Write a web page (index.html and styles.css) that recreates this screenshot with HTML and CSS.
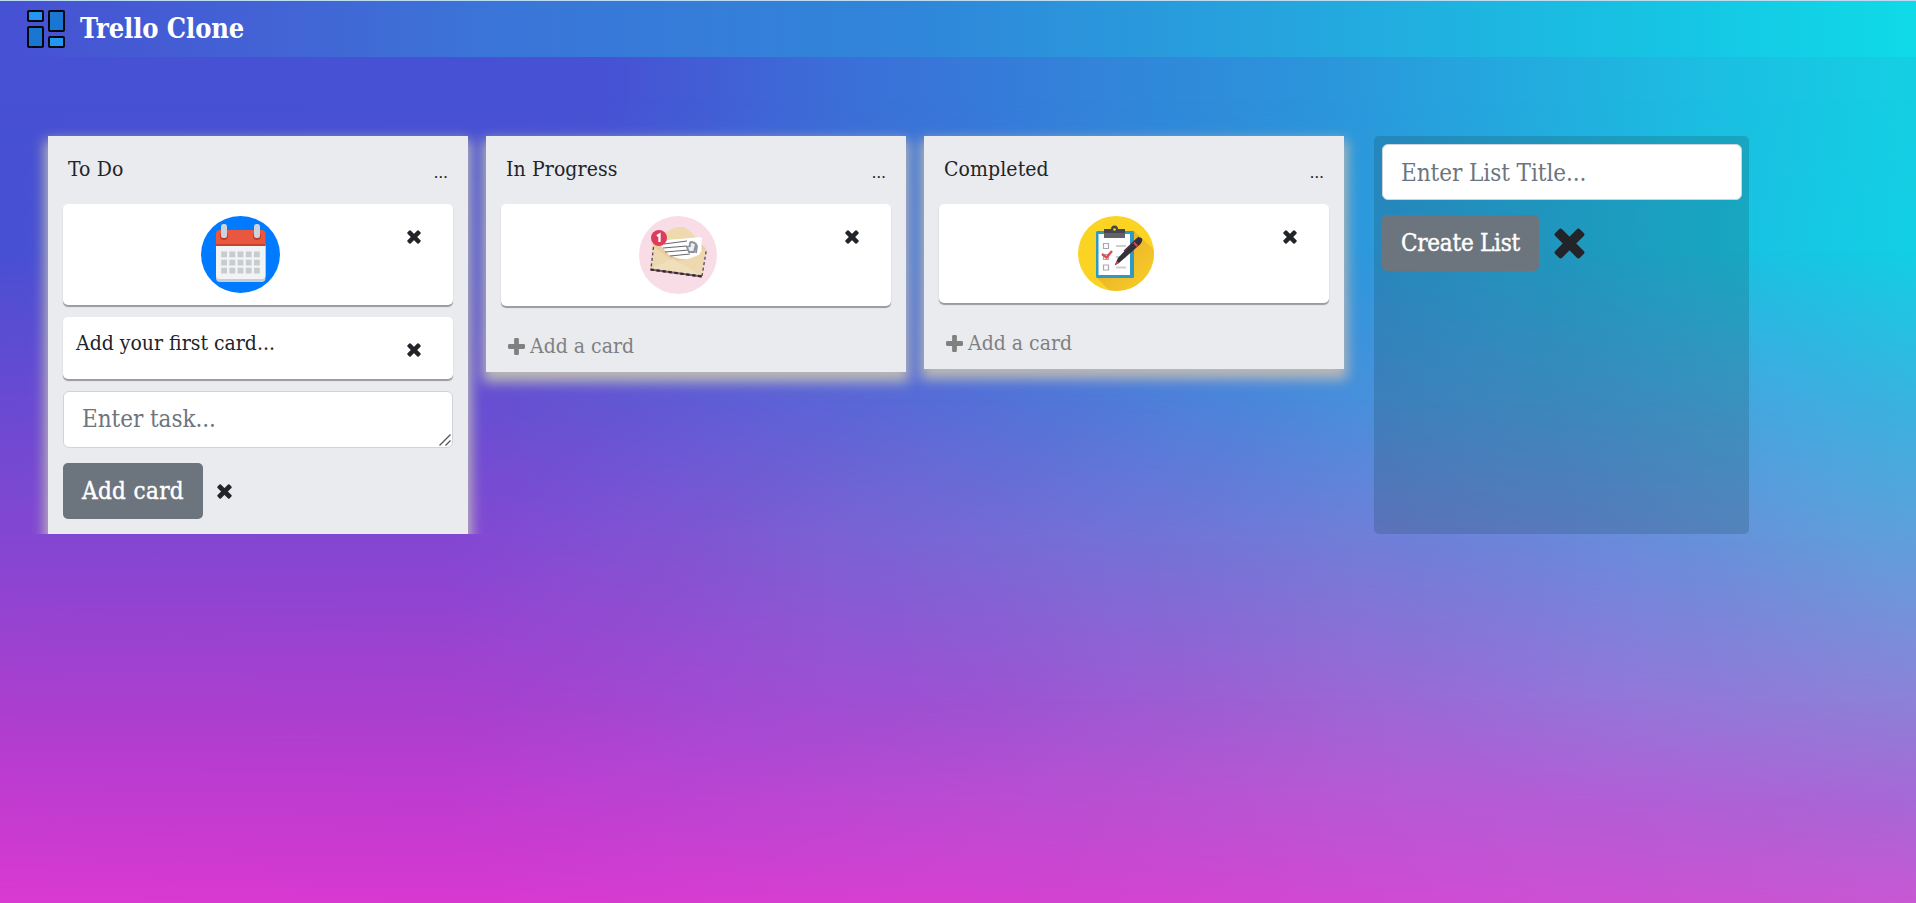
FILE: index.html
```html
<!DOCTYPE html>
<html lang="en">
<head>
<meta charset="utf-8">
<title>Trello Clone</title>
<link rel="stylesheet" href="styles.css">
</head>
<body>
<div class="backdrop"><i class="tone t1"></i><i class="tone t2"></i><i class="tone t3"></i><i class="tone t4"></i><i class="tone t5"></i><i class="tone t6"></i></div>

<svg class="defs" width="0" height="0">
  <symbol id="times" viewBox="0 0 32 32"><g transform="rotate(45 16 16)"><rect x="-2" y="11" width="36" height="10" rx="2.2"/><rect x="11" y="-2" width="10" height="36" rx="2.2"/></g></symbol>
  <symbol id="plus" viewBox="0 0 32 32"><rect y="11.500" width="32" height="9" rx="2.4"/><rect x="11.500" width="9" height="32" rx="2.4"/></symbol>
</svg>

<header class="navbar">
  <svg class="logo" viewBox="0 0 38 38" stroke="#05070c" stroke-width="2">
    <rect x="1" y="1" width="15" height="10" rx="1" fill="#2196f3"/>
    <rect x="22" y="1" width="15" height="20" rx="1" fill="#1976d2"/>
    <rect x="1" y="17" width="15" height="20" rx="1" fill="#1976d2"/>
    <rect x="22" y="27" width="15" height="10" rx="1" fill="#2196f3"/>
  </svg>
  <span class="brand">Trello Clone</span>
</header>

<main class="board">
  <section class="list">
    <div class="list-head"><span class="title">To Do</span><span class="dots">...</span></div>
    <div class="card card-todo">
      <svg class="pic" width="79" height="77" viewBox="0 0 79 77">
        <ellipse cx="39.500" cy="38.500" rx="39.500" ry="38.500" fill="#007bff"/>
        <path d="M15 28h49.500v34a4 4 0 0 1-4 4h-41.500a4 4 0 0 1-4-4z" fill="#c5cdd6"/>
        <path d="M15 28h49.500v31a4 4 0 0 1-4 4h-41.500a4 4 0 0 1-4-4z" fill="#f1f3f5"/>
        <path d="M15 30V18a4 4 0 0 1 4-4h41.500a4 4 0 0 1 4 4v12z" fill="#e9573f"/>
        <path d="M15 28h49.500v2H15z" fill="#c9432f"/>
        <circle cx="23" cy="20" r="4" fill="#bd3c2c"/><circle cx="56" cy="20" r="4" fill="#bd3c2c"/>
        <rect x="20" y="8" width="6" height="14" rx="2.500" fill="#cdd3da"/><rect x="53" y="8" width="6" height="14" rx="2.500" fill="#cdd3da"/>
        <g stroke="#c8cccf" stroke-width="5.800" stroke-dasharray="5.800 2.400"><path d="M20.200 38.300h39"/><path d="M20.200 46.600h39"/><path d="M20.200 54.700h39"/></g>
      </svg>
      <svg class="x"><use href="#times"/></svg>
    </div>
    <div class="card card-text"><span class="card-label">Add your first card...</span><svg class="x"><use href="#times"/></svg></div>
    <div class="task-wrap">
      <textarea class="task" rows="1" placeholder="Enter task..."></textarea>
      <svg class="grip" viewBox="0 0 12 12"><path d="M.5 11.500 11.500.5M6.500 11.500l5-5" fill="none" stroke="#50545a" stroke-width="1.300"/></svg>
    </div>
    <div class="actions"><button class="btn btn-card">Add card</button><svg class="x"><use href="#times"/></svg></div>
  </section>

  <section class="list">
    <div class="list-head"><span class="title">In Progress</span><span class="dots">...</span></div>
    <div class="card card-prog">
      <svg class="pic" width="78" height="78" viewBox="0 0 78 78">
        <circle cx="39" cy="39" r="39" fill="#f8dde7"/>
        <path d="M14 27 36 13q6-4 12 0L68 34 63 60 11 53z" fill="#e8cfa2"/>
        <path d="M29 15q12-8 22 0l8 9H16z" fill="#efd9ae"/>
        <path d="M19 25l43-4 1 20-10 4-23-6z" fill="#fff"/>
        <path d="M15 31 35 46 46 44 67 33 63 60 11 53z" fill="#eed8b0"/>
        <path d="M22 30q17 21 39 8l2-16-35 2z" fill="#fff"/>
        <path d="M25 28l23-3M24 32l24-2M26 36l24-2M31 40l20-2" stroke="#66666f" stroke-width="1"/>
        <path d="M53 26q-3 0-2 4l-3 1 2 5 5 0 2-8zM55 26l3 4-1 7" fill="#eee" stroke="#8c929b" stroke-width="1.800"/>
        <path d="M11 53 34 43 63 60" fill="#f0dfbd"/>
        <path d="M14.500 31 12 53 M63 60 67.500 33" fill="none" stroke="#e9dfd6" stroke-width="1.500"/>
        <path d="M14.500 31 12 53 M63 60 67.500 33" fill="none" stroke="#5c4452" stroke-width="1.300" stroke-dasharray="3 2.500"/>
        <path d="M11.500 53.500 63 60.500" fill="none" stroke="#7f6068" stroke-width="2.200"/>
        <path d="M11.500 53.500 63 60.500" fill="none" stroke="#33283a" stroke-width="2.200" stroke-dasharray="3.500 2.500"/>
        <circle cx="20" cy="22" r="8" fill="#dc3d5d"/><path d="M18 20l2.500-1.500V26" fill="none" stroke="#fff" stroke-width="2.300"/>
      </svg>
      <svg class="x"><use href="#times"/></svg>
    </div>
    <div class="add"><svg class="plus"><use href="#plus"/></svg><span>Add a card</span></div>
  </section>

  <section class="list">
    <div class="list-head"><span class="title">Completed</span><span class="dots">...</span></div>
    <div class="card card-done">
      <svg class="pic" width="76" height="75" viewBox="0 0 76 75">
        <defs>
          <clipPath id="disc"><ellipse cx="38" cy="37.500" rx="38" ry="37.500"/></clipPath>
          <linearGradient id="shade" x1="0" y1="0" x2="1" y2="1"><stop offset=".3" stop-color="#e9b52d"/><stop offset=".75" stop-color="#f8cc26"/></linearGradient>
        </defs>
        <g clip-path="url(#disc)"><path d="M0 0h76v75H0z" fill="#fbd323"/><path d="M55 14 85 42 60 90 42 85 18 61z" fill="url(#shade)"/></g>
        <rect x="18" y="15" width="38" height="47" rx="1.500" fill="#2e9ac4"/><path d="M20.500 18h31.500v41H20.500z" fill="#fff"/>
        <path d="M26 13h7a3.500 3.500 0 0 1 7 0h7v9H26z" fill="#45454d"/><path d="M26 17h21v5H26z" fill="#606269"/><circle cx="36.500" cy="13.500" r="1.300" fill="#fbd323"/>
        <g fill="none" stroke="#a8a9b0" stroke-width="1.200"><path d="M25.500 27.500h5v5h-5zM25.500 38.500h5v5h-5zM25.500 49h5v5h-5z"/><path d="M38 30h10M38 41h10M38 51.500h10" stroke="#ccd0d4" stroke-width="1.800"/></g>
        <path d="M24 38l4.500 3.500L34 35" fill="none" stroke="#e24b53" stroke-width="2.400"/>
        <path d="M36.500 49.500 40 42 57 24q4-4 7-1.500 1 3-2 6L41 47z" fill="#32313a"/><path d="M37 49l2-4 2 2zM55 27l1.500-1.500 3.500 4-1.500 1.500z" fill="#d9434f"/><path d="M46 35 61 21" stroke="#503048" stroke-width="1.100"/>
      </svg>
      <svg class="x"><use href="#times"/></svg>
    </div>
    <div class="add"><svg class="plus"><use href="#plus"/></svg><span>Add a card</span></div>
  </section>

  <section class="composer">
    <input class="list-title" placeholder="Enter List Title...">
    <div class="actions"><button class="btn btn-list">Create List</button><svg class="x x-large"><use href="#times"/></svg></div>
  </section>
</main>
</body>
</html>
```
FILE: styles.css
```css
* { box-sizing: border-box; }
body {
  margin: 0;
  height: 903px;
  overflow: hidden;
  color: #212529;
  font-family: "Roboto Slab", "DejaVu Serif Condensed", "DejaVu Serif", serif;
  font-stretch: condensed;
}
.defs { position: absolute; }

/* Colour mesh: one horizontal gradient per row, each faded in below the previous row */
.backdrop { position: absolute; inset: 0; z-index: -1; overflow: hidden; background: linear-gradient(90deg, #4751d3 0, #4751d3 600px, #3b6fd8 850px, #3088da 1150px, #2c93db 1300px, #24a8de 1500px, #1cbde1 1700px, #14cfe4 1916px); }
.tone { position: absolute; inset: 0; }
.t1 { background: linear-gradient(90deg, #4850d2 0, #5054d2 475px, #3f74d8 915px, #2d98dc 1360px, #18c4e2 1760px, #12cfe4 1916px); mask-image: linear-gradient(transparent 100px, #000 250px); }
.t2 { background: linear-gradient(90deg, #6a4ad2 0, #664fd2 500px, #5c64d6 820px, #5273d8 1020px, #488edb 1340px, #43a8df 1760px, #38b4e0 1916px); mask-image: linear-gradient(transparent 250px, #000 400px); }
.t3 { background: linear-gradient(90deg, #8447d2 0, #8447d2 450px, #8056d2 700px, #7b62d4 850px, #7470d6 1100px, #707ed8 1370px, #6b86da 1540px, #6694da 1750px, #5fa0db 1916px); mask-image: linear-gradient(transparent 400px, #000 540px); }
.t4 { background: linear-gradient(90deg, #a93fcf 0, #a740cf 450px, #a04ad3 700px, #9c54d2 1000px, #9c65d5 1330px, #9475d8 1600px, #8c82d8 1916px); mask-image: linear-gradient(transparent 540px, #000 700px); }
.t5 { background: linear-gradient(90deg, #c23bcf 0, #c03bd0 450px, #bc44d2 700px, #ba4cd2 1000px, #b857d4 1330px, #b35ed5 1600px, #a668d5 1916px); mask-image: linear-gradient(transparent 700px, #000 800px); }
.t6 { background: linear-gradient(90deg, #d93ad1 0, #d739d0 480px, #d540d1 960px, #d048d2 1300px, #c858d3 1916px); mask-image: linear-gradient(transparent 800px, #000 903px); }

.navbar {
  display: flex;
  align-items: center;
  height: 57px;
  padding: 0 27px 1px;
  border-top: 1px solid #bcdcf4;
  background: linear-gradient(90deg, #4751d3 0, #4265d5 300px, #3b74d8 480px, #3085da 900px, #25a6de 1300px, #17c3e3 1650px, #0fdae8 1916px);
}
.logo { width: 38px; height: 38px; }
.brand { margin-left: 15px; color: #fff; font-size: 27px; font-weight: 700; white-space: nowrap; letter-spacing: -0.1px; }

.board { display: flex; align-items: flex-start; gap: 18px; height: 407px; margin-top: 70px; padding: 9px 0 0 48px; overflow: hidden; }
.list { width: 420px; flex: none; padding: 15px 15px 11px; background: #eaebef; box-shadow: 0 7px 12px 3px #bbb9b6; }
.list:first-child { height: 420px; }
.list-head { display: flex; justify-content: space-between; height: 53px; padding: 4px 5px 0; }
.title { font-size: 21px; line-height: 29px; white-space: nowrap; letter-spacing: 0.1px; }
.dots { font: 18px/33px Roboto, sans-serif; }
.card { display: flex; border-radius: 5px; background: #fff; box-shadow: 0 2px 1px #9a9b9f; margin-bottom: 12px; }
.card .pic { display: block; margin: 12px 0 0 138px; flex: none; }
.card .x { margin: 26px 32px 0 auto; }
.card-todo { height: 101px; }
.card-prog { height: 102px; }
.card-done { height: 99px; }
.card-done .pic { margin-left: 139px; }
.card-text { height: 62px; }
.card-label { padding: 11px 0 0 13px; font-size: 21px; line-height: 30px; white-space: nowrap; }
.x { width: 14px; height: 14px; flex: none; fill: #212529; }
.task-wrap { position: relative; }
.grip { position: absolute; right: 2px; bottom: 2px; width: 12px; height: 12px; }
.task, .list-title {
  display: block;
  width: 100%;
  height: 57px;
  padding: 9px 18px 8px;
  border: 1px solid #ced4da;
  border-radius: 6px;
  background: #fff;
  font-family: inherit;
  font-stretch: inherit;
  font-size: 24px;
  line-height: 36px;
  letter-spacing: -0.05px;
  overflow: hidden;
  resize: none;
}
.list-title { height: 56px; }
.task::placeholder, .list-title::placeholder { color: #6c757d; opacity: 1; }
.actions { display: flex; align-items: center; gap: 14px; margin-top: 15px; }
.actions .x { width: 15px; height: 15px; }
.btn { height: 56px; padding: 0; border: 0; border-radius: 5px; color: #fff; background: #6c757d; font: inherit; font-size: 24px; font-stretch: condensed; white-space: nowrap; -webkit-text-stroke: 0.4px #fff; }
.btn-card { width: 140px; letter-spacing: 0.35px; }
.btn-list { width: 157px; letter-spacing: -0.25px; }
.add { display: flex; align-items: center; gap: 5px; height: 30px; margin-top: 25px; padding-left: 7px; color: #808080; font-size: 21px; white-space: nowrap; }
.plus { width: 17px; height: 17px; fill: #808080; }

.composer { width: 375px; height: 398px; flex: none; margin-left: 12px; padding: 8px 7px 8px 8px; border-radius: 5px; background: rgba(20, 60, 60, 0.2); }
.composer .actions { gap: 15px; }
.composer .x-large { width: 31px; height: 31px; }
```
